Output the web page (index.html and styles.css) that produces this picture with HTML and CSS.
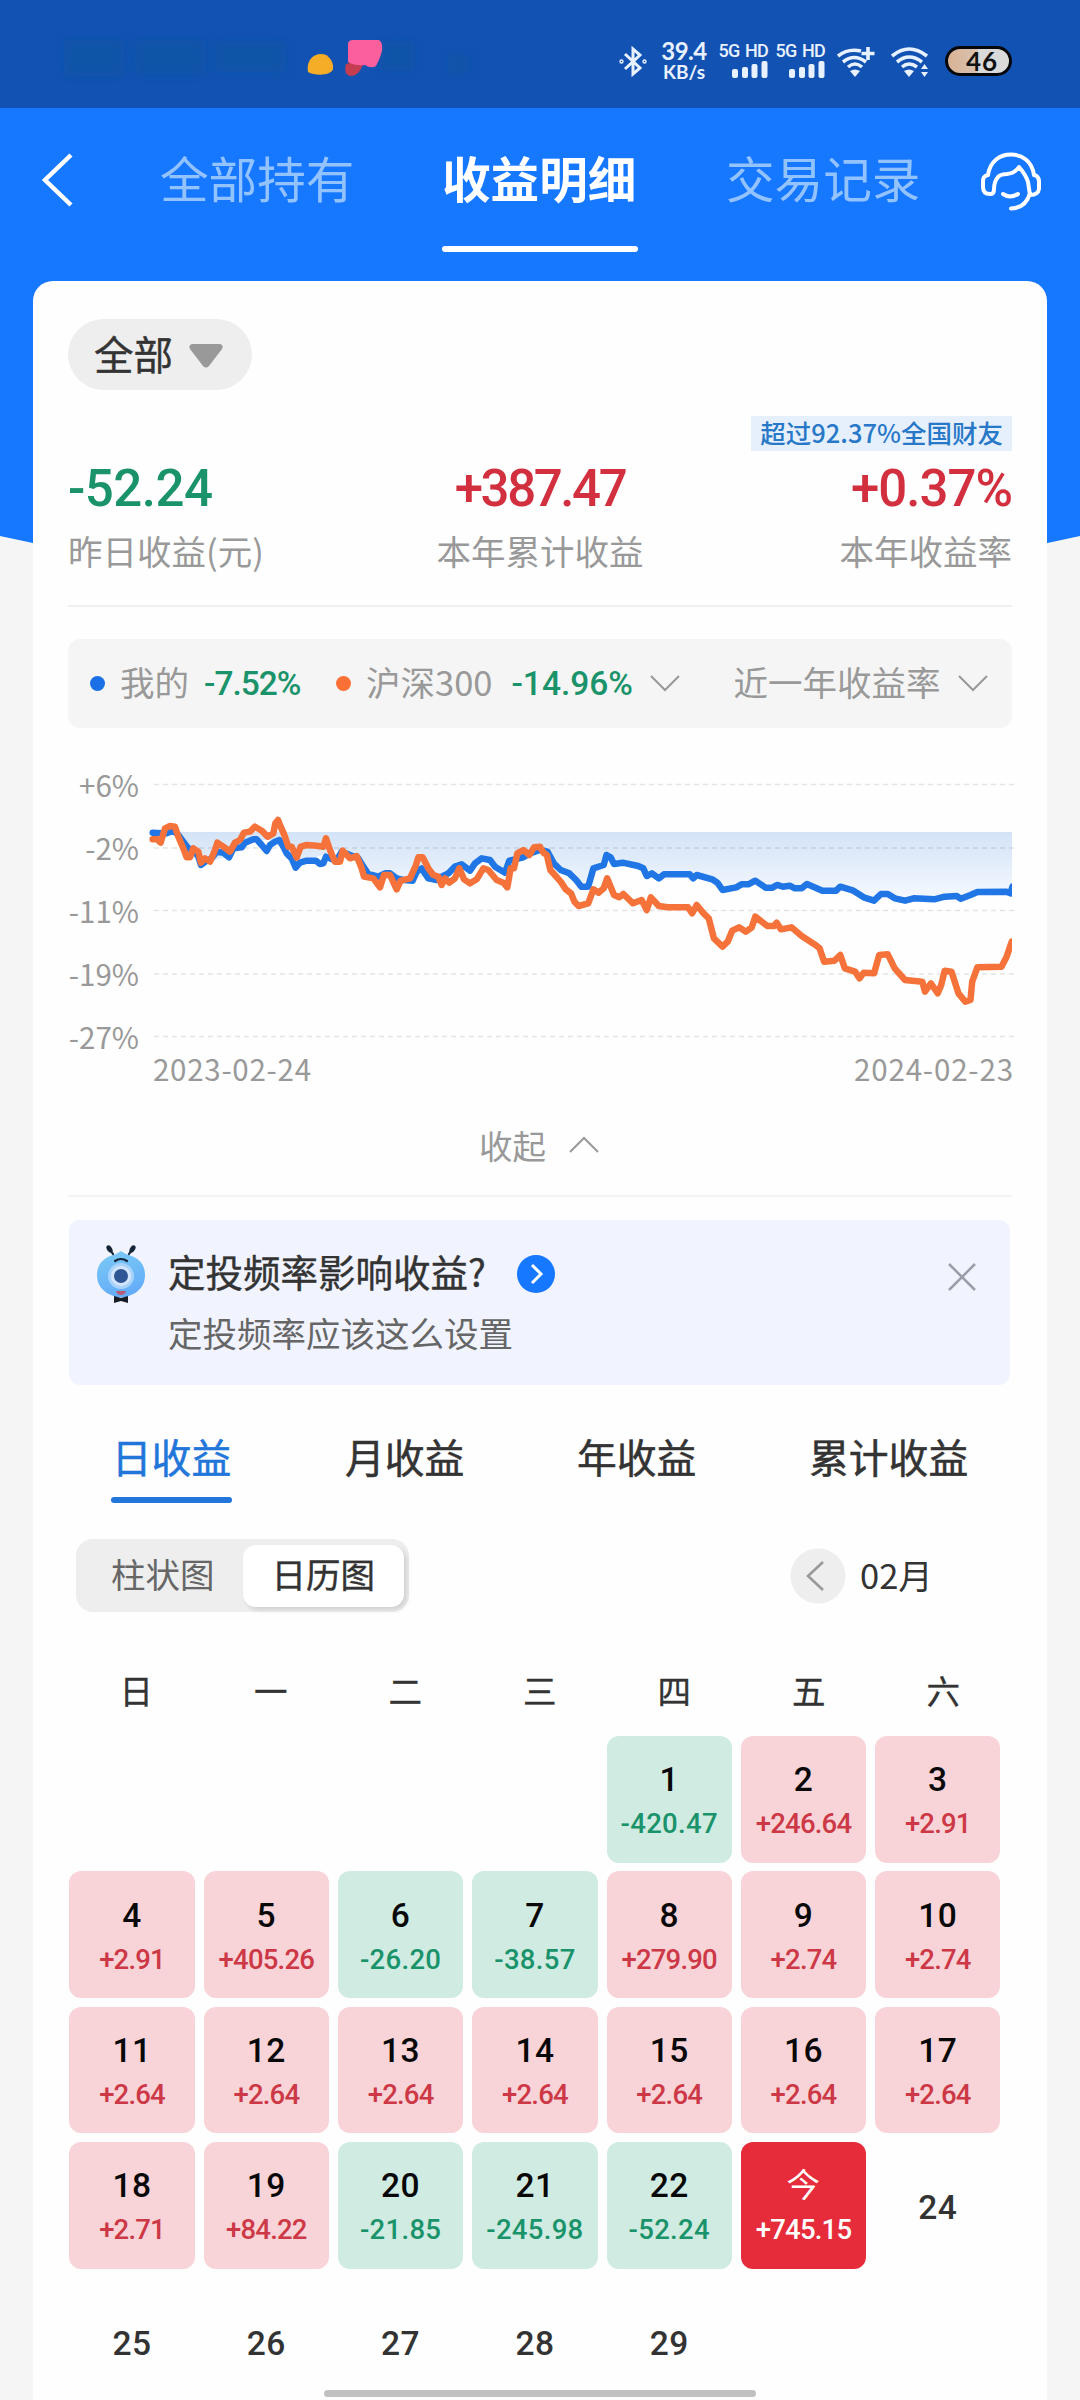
FILE: index.html
```
<!DOCTYPE html>
<html lang="zh-CN">
<head>
<meta charset="utf-8">
<title>收益明细</title>
<link rel="stylesheet" href="styles.css">
</head>
<body>
<div class="screen">
  <header class="status">
    <svg class="notice" width="430" height="50" viewBox="52 34 430 50">
      <defs><filter id="soft" x="-10%" y="-60%" width="120%" height="220%"><feGaussianBlur stdDeviation="5"/></filter></defs>
      <g filter="url(#soft)" fill="#0f56a0" opacity=".6"><rect x="64" y="40" width="60" height="36"/><rect x="135" y="40" width="70" height="34"/><rect x="215" y="42" width="70" height="30"/><rect x="380" y="42" width="34" height="28"/><rect x="448" y="54" width="20" height="20"/></g>
      <path d="M308 72c-2-10 4-18 13-18 8 0 13 8 12 15-2 7-18 7-25 3z" fill="#f5ad27"/>
      <path d="M346 64q10-4 17 1-5 11-11 11-9 0-6-12z" fill="#c43c50"/>
      <path d="M348 43q1-3 5-3h26q4 2 3 11-2 8-6 15-5 3-11-1-10 1-17-3z" fill="#fb5f9c"/>
    </svg>
    <div class="status-icons">
      <svg class="bt" width="28" height="32" viewBox="0 0 28 32" fill="none" stroke="#e8f1ff" stroke-width="3"><path d="M6 8l15 14-7 6V3l7 6L6 23"/><circle cx="2.500" cy="15.500" r=".7"/><circle cx="25.500" cy="15.500" r=".7"/></svg>
      <div class="speed"><b>39.4</b><span>KB/s</span></div>
      <div class="cell-net"><span>5G HD</span><svg width="36" height="17" fill="#e8f1ff"><rect x="0" y="8" width="6" height="9" rx="2"/><rect x="10" y="6" width="6" height="11" rx="2"/><rect x="19.500" y="3" width="6" height="14" rx="2"/><rect x="29.500" y="0" width="6" height="17" rx="2"/></svg></div>
      <div class="cell-net second"><span>5G HD</span><svg width="36" height="17" fill="#e8f1ff"><rect x="0" y="8" width="6" height="9" rx="2"/><rect x="10" y="6" width="6" height="11" rx="2"/><rect x="19.500" y="3" width="6" height="14" rx="2"/><rect x="29.500" y="0" width="6" height="17" rx="2"/></svg></div>
      <svg class="wifi" width="38" height="32" viewBox="0 0 38 32" fill="none" stroke="#e8f1ff" stroke-width="3.600"><path d="M1 10Q11 2 24 5M6 16q11-9 23 0M11 21q7-6 14 0M31 1v13M24.500 7.500h13"/><path d="M13 25q5-3 10 0l-5 6z" fill="#e8f1ff" stroke="none"/></svg>
      <svg class="wifi two" width="38" height="32" viewBox="0 0 38 32" fill="none" stroke="#e8f1ff" stroke-width="3.600"><path d="M1 10q17-14 35 0M6 16q12-10 25 0M11 21q7-6 15 0"/><path d="M13 25q5-3 10 0l-5 6zM30 23l3.500-5 3.500 5zM30 26h7l-3.500 5z" fill="#e8f1ff" stroke="none"/></svg>
      <div class="battery">46</div>
    </div>
  </header>

  <nav class="topnav">
    <svg class="back" width="32" height="56" viewBox="0 0 32 56" fill="none" stroke="#fff" stroke-width="4.500"><path d="M30 3L4 28l26 25"/></svg>
    <span class="nav-tab">全部持有</span>
    <span class="nav-tab on">收益明细</span>
    <span class="nav-tab last">交易记录</span>
    <svg class="service" width="62" height="60" viewBox="0 0 62 60" fill="none" stroke="#fff" stroke-width="4" stroke-linecap="round" stroke-linejoin="round"><path d="M8 23C10 9 20 2.500 31 2.500S52 9 54 23M8 23Q3 24 3 29v6q0 7 7 7h1q3 0 3-5 0-7 4-12 3-3 9-3 8-1 12-7 7 8 9 15l2 13q8 0 9-6v-7q0-6-5-7M50 41Q46 56 31 56.500M23 42q7 5 15 0"/></svg>
  </nav>

  <svg class="hero-curve" width="1080" height="60" viewBox="0 0 1080 60"><path d="M0 0H1080V26Q540 146 0 26z" fill="#1677ff"/></svg>

  <main class="card">
    <button class="filter">全部<svg width="34" height="24" viewBox="0 0 34 24"><path d="M3 0h28q4 1 2 5L20 22q-3 3-6 0L1 5Q-1 1 3 0z" fill="#999"/></svg></button>

    <section class="stats">
      <div class="stat"><b class="green">-52.24</b><span>昨日收益(元)</span></div>
      <div class="stat mid"><b class="red">+387.47</b><span>本年累计收益</span></div>
      <div class="stat end"><em>超过92.37%全国财友</em><b class="red">+0.37%</b><span>本年收益率</span></div>
    </section>

    <section class="legend">
      <i class="dot blue"></i><span>我的</span><b class="b1">-7.52%</b>
      <i class="dot orange"></i><span>沪深300</span><b class="b2">-14.96%</b>
      <svg class="chev" width="30" height="18" viewBox="0 0 30 18"><path d="M1 1l14 14L29 1"/></svg>
      <span class="range">近一年收益率</span>
      <svg class="chev" width="30" height="18" viewBox="0 0 30 18"><path d="M1 1l14 14L29 1"/></svg>
    </section>

    <svg class="chart" width="952" height="362" viewBox="64 738 952 362">
      <defs>
        <linearGradient id="area" x1="0" y1="832" x2="0" y2="900" gradientUnits="userSpaceOnUse"><stop offset="0" stop-color="#d3e3f7"/><stop offset="1" stop-color="#f5f9ff"/></linearGradient>
        <clipPath id="plot"><rect x="148" y="760" width="864" height="300"/></clipPath>
      </defs>
      <g fill="url(#area)"><path d="M180 832H540V850L520 854 505 872 480 860 460 870 435 876 400 880 360 867 345 848 300 862 280 840 255 840 230 856 200 864 185 838z"/><path d="M540 832H1012V888L960 896 900 899 870 898 840 890 790 886 755 882 725 888 700 876 660 874 605 856 595 868 585 886 560 870 547 850 540 850z"/></g>
      <g class="grid"><path d="M154 784.500H1014M154 848H1014M154 910.500H1014M154 974H1014M154 1036.500H1014"/></g>
      <g class="axis" text-anchor="end"><text x="139" y="797">+6%</text><text x="139" y="859.500">-2%</text><text x="139" y="923">-11%</text><text x="139" y="986">-19%</text><text x="139" y="1049">-27%</text></g>
      <g class="axis"><text x="153" y="1081" textLength="158">2023-02-24</text><text x="854" y="1081" textLength="159">2024-02-23</text></g>
      <g clip-path="url(#plot)">
      <g class="line mine">
        <polyline transform="translate(40 620) scale(.33333)" points="338,638 365,640 380,640 400,632 415,645 430,665 445,685 460,690 475,710 483,735 500,722 515,715 530,695 550,698 567,712 580,685 605,682 615,668 640,658 650,658 665,675 680,693 690,675 705,665 718,660 730,680 740,700 755,715 767,743 780,728 800,722 828,722 840,732 850,730 858,710 870,715 890,722 905,695 930,705 955,715 970,740 985,762 1015,770 1035,760 1050,760 1070,775 1090,780 1118,782 1130,755 1145,745 1165,775 1190,780 1205,770 1225,760 1245,740 1265,733 1290,752 1305,730 1325,715 1350,720 1365,740 1395,758 1408,722 1425,718 1450,712 1470,700 1500,690"/>
        <polyline transform="translate(540 620) scale(.34438 .33333)" points="0,690 22,695 40,730 60,750 85,760 105,780 120,800 140,800 155,745 185,735 193,705 205,712 215,732 240,728 285,738 300,745 310,768 325,760 345,775 360,763 435,763 445,775 455,765 500,778 515,788 530,810 570,802 585,793 605,793 625,782 655,803 675,803 688,795 705,800 725,797 740,805 760,805 775,792 800,803 820,812 860,812 872,800 910,812 940,832 970,842 990,822 1010,822 1030,835 1060,842 1085,835 1145,838 1175,830 1210,828 1222,836 1250,825 1270,816 1355,815 1366,820 1372,800"/>
      </g>
      <g class="line index">
        <polyline transform="translate(40 620) scale(.33333)" points="338,658 352,658 362,668 375,625 390,618 405,620 415,650 430,685 440,712 450,712 460,685 475,695 483,728 495,715 510,725 525,690 532,668 550,680 570,695 585,668 600,660 612,638 630,635 645,620 665,632 683,650 700,640 706,610 714,600 722,620 735,650 745,680 755,680 770,713 782,680 800,675 830,677 850,680 858,655 870,690 885,725 900,725 908,692 930,715 950,708 965,745 972,770 1000,775 1020,802 1032,765 1050,765 1070,808 1082,782 1110,775 1128,735 1135,712 1148,712 1165,745 1180,765 1195,770 1205,795 1215,775 1228,788 1245,775 1258,745 1272,778 1290,790 1310,778 1330,745 1345,750 1370,780 1390,788 1402,802 1412,745 1422,745 1432,700 1450,690 1468,705 1482,682 1500,680"/>
        <polyline transform="translate(540 620) scale(.34438 .33333)" points="0,682 12,700 20,705 30,750 60,785 75,808 90,820 100,845 112,858 140,850 155,808 170,818 185,805 195,775 215,825 230,832 242,822 270,850 295,840 310,870 322,832 345,858 370,862 430,862 442,880 455,855 475,880 490,895 505,955 530,980 545,965 558,932 578,922 598,935 615,922 625,890 660,918 680,918 687,908 700,928 730,922 760,948 800,975 812,985 825,1025 855,1022 872,1005 885,1045 915,1055 928,1075 940,1058 970,1060 985,1005 1010,1003 1030,1045 1060,1080 1110,1085 1118,1115 1135,1090 1155,1120 1165,1095 1175,1052 1195,1055 1215,1120 1235,1145 1250,1140 1255,1085 1270,1042 1340,1040 1355,1010 1370,965"/>
      </g>
      </g>
    </svg>

    <div class="fold"><span>收起</span><svg class="chev" width="30" height="18" viewBox="0 0 30 18"><path d="M1 16L15 2l14 14"/></svg></div>

    <section class="banner">
      <svg class="mascot" width="50" height="60" viewBox="0 0 50 60">
        <defs><linearGradient id="body" x1="0" y1="0" x2=".3" y2="1"><stop offset="0" stop-color="#7ccbf5"/><stop offset="1" stop-color="#64adf8"/></linearGradient></defs>
        <path d="M25 6q4 3 8 4 16 5 16 20 0 14-14 20-10 5-20 0Q1 44 1 30 1 15 17 10q4-1 8-4z" fill="url(#body)"/>
        <circle cx="25" cy="31" r="13" fill="#a9d3fb"/><circle cx="25" cy="31" r="10" fill="#d3e6fd"/><circle cx="25" cy="31" r="7" fill="#2e5594"/>
        <path d="M19 16q6-4 12 0M17 9l-4-6M33 9l4-6" fill="none" stroke="#162437" stroke-width="2.200" stroke-linecap="round"/>
        <ellipse cx="13.500" cy="4" rx="2.500" ry="4" transform="rotate(-32 13.500 4)" fill="#162437"/><ellipse cx="36.500" cy="4" rx="2.500" ry="4" transform="rotate(32 36.500 4)" fill="#162437"/>
        <path d="M20 46h10q-1 4-5 4t-5-4z" fill="#b65b72"/><path d="M18 51l7 2 7-2v7l-7-2-7 2z" fill="#171d26"/>
      </svg>
      <div class="banner-copy"><div class="banner-title"><span>定投频率影响收益?</span><svg width="38" height="38" viewBox="0 0 38 38"><circle cx="19" cy="19" r="19" fill="#1677ff"/><path d="M15 10l9 9-9 9" fill="none" stroke="#fff" stroke-width="3"/></svg></div><p>定投频率应该这么设置</p></div>
      <svg class="close" width="28" height="28" viewBox="0 0 28 28"><path d="M1 1l26 26M27 1L1 27" stroke="#999ea8" stroke-width="2.500"/></svg>
    </section>

    <nav class="period"><span class="on">日收益</span><span>月收益</span><span>年收益</span><span>累计收益</span></nav>

    <div class="tools">
      <div class="segment"><span>柱状图</span><span class="on">日历图</span></div>
      <div class="month"><svg width="56" height="56" viewBox="0 0 56 56"><circle cx="28" cy="28" r="27.500" fill="#eee"/><path d="M33 14L18 28l15 14" fill="none" stroke="#999" stroke-width="2.600"/></svg><span>02月</span></div>
    </div>

    <div class="week"><span>日</span><span>一</span><span>二</span><span>三</span><span>四</span><span>五</span><span>六</span></div>

    <section class="calendar">
      <div class="day down first"><b>1</b><span>-420.47</span></div><div class="day up"><b>2</b><span>+246.64</span></div><div class="day up"><b>3</b><span>+2.91</span></div>
      <div class="day up"><b>4</b><span>+2.91</span></div><div class="day up"><b>5</b><span>+405.26</span></div><div class="day down"><b>6</b><span>-26.20</span></div><div class="day down"><b>7</b><span>-38.57</span></div><div class="day up"><b>8</b><span>+279.90</span></div><div class="day up"><b>9</b><span>+2.74</span></div><div class="day up"><b>10</b><span>+2.74</span></div>
      <div class="day up"><b>11</b><span>+2.64</span></div><div class="day up"><b>12</b><span>+2.64</span></div><div class="day up"><b>13</b><span>+2.64</span></div><div class="day up"><b>14</b><span>+2.64</span></div><div class="day up"><b>15</b><span>+2.64</span></div><div class="day up"><b>16</b><span>+2.64</span></div><div class="day up"><b>17</b><span>+2.64</span></div>
      <div class="day up"><b>18</b><span>+2.71</span></div><div class="day up"><b>19</b><span>+84.22</span></div><div class="day down"><b>20</b><span>-21.85</span></div><div class="day down"><b>21</b><span>-245.98</span></div><div class="day down"><b>22</b><span>-52.24</span></div><div class="day today"><b>今</b><span>+745.15</span></div><div class="day"><b>24</b></div>
      <div class="day"><b>25</b></div><div class="day"><b>26</b></div><div class="day"><b>27</b></div><div class="day"><b>28</b></div><div class="day"><b>29</b></div>
    </section>
  </main>
  <div class="home-bar"></div>
</div>
</body>
</html>
```
FILE: styles.css
```
* { box-sizing: border-box; }
body { margin: 0; background: #f5f5f5; font-family: "Noto Sans CJK SC", sans-serif; color: #333; }
b, em, i { font-style: normal; font-weight: 500; }
svg { display: block; flex: none; }
p { margin: 0; }
.screen { position: relative; width: 1080px; height: 2400px; overflow: hidden; background: linear-gradient(#1677ff 0 511px, #f5f5f5 511px); }

.status { height: 108px; padding-left: 52px; background: #1252b2; display: flex; align-items: flex-start; }
.notice { margin-top: 34px; }
.status-icons { display: flex; margin-left: 137px; padding-top: 42px; color: #e8f1ff; font-family: Roboto, sans-serif; }
.bt { margin-top: 4px; }
.speed { width: 46px; margin-left: 14px; margin-top: -2px; display: flex; flex-direction: column; align-items: center; }
.speed b { font-family: Lato, sans-serif; font-weight: 700; font-size: 24px; line-height: 22px; letter-spacing: -.5px; }
.speed span { font-family: Lato, sans-serif; font-weight: 700; font-size: 19px; line-height: 19px; }
.cell-net { width: 48px; margin-left: 13px; display: flex; flex-direction: column; align-items: flex-end; font-size: 18px; font-weight: 500; line-height: 18px; white-space: nowrap; letter-spacing: -.8px; word-spacing: 2px; }
.cell-net svg { margin-top: 1px; }
.cell-net.second { margin-left: 9px; }
.wifi { margin: 4px 0 0 12px; }
.wifi.two { margin-left: 16px; }
.battery { width: 67px; height: 30px; margin: 4px 0 0 16px; padding-left: 7px; border: 3px solid #05070b; border-radius: 15px; background: linear-gradient(90deg, #d9b294 0, #d8c2b1 48%, #dadada 50%); color: #111; font: 700 26px/24px Lato, sans-serif; text-align: center; letter-spacing: 1px; }

.topnav { height: 173px; background: #1677ff; display: flex; align-items: flex-start; }
.back { margin: 44px 0 0 41px; }
.nav-tab { width: 196px; height: 144px; margin-left: 87px; padding-top: 33px; font-size: 48.600px; line-height: 72px; color: #93c3ff; white-space: nowrap; }
.nav-tab.on { position: relative; margin-left: 86px; font-weight: 700; color: #fff; }
.nav-tab.on::after { content: ""; position: absolute; left: 0; bottom: 0; width: 196px; height: 6px; border-radius: 3px; background: #fff; }
.nav-tab.last { margin-left: 88px; }
.service { margin: 44px 0 0 58px; }

.hero-curve { position: absolute; left: 0; top: 510px; }
.card { position: relative; width: 1014px; height: 2119px; margin-left: 33px; padding: 38px 35px 0; border-radius: 20px 20px 0 0; background: #fefefe; overflow: hidden; }

.filter { width: 184px; height: 71px; border: 0; border-radius: 36px; background: #eee; display: flex; align-items: center; gap: 15px; padding: 0 0 4px 26px; font: 400 39.500px/60px "Noto Sans CJK SC", sans-serif; color: #333; -webkit-text-stroke: .4px #333; }
.filter svg { margin: 6px 0 0 1px; }
.stats { height: 217px; display: grid; grid-template-columns: 1fr 1fr 1fr; border-bottom: 2px solid #f0f0f0; }
.stat { display: flex; flex-direction: column; align-items: flex-start; padding-top: 67px; }
.stat.mid { align-items: center; }
.stat.end { align-items: flex-end; padding-top: 26px; }
.stat b { font: 500 51px/64px Roboto, sans-serif; letter-spacing: -.5px; }
.stat.mid b { letter-spacing: -2.400px; }
.stat.end b { letter-spacing: -1px; }
.stat span { font-size: 34.500px; line-height: 50px; margin-top: 4px; color: #999; white-space: nowrap; }
.stat em { height: 35px; margin-bottom: 6px; padding: 0 9px; font-size: 25.500px; line-height: 32px; color: #2878c8; background: #e6f0fc; white-space: nowrap; }
.green { color: #1a936b; }
.red { color: #d2303f; }

.legend { height: 89px; margin-top: 32px; padding-left: 22px; border-radius: 12px; background: #f5f5f5; display: flex; align-items: center; font-size: 34.500px; line-height: 50px; color: #999; white-space: nowrap; }
.legend > span { margin-bottom: 5px; }
.dot { width: 15px; height: 15px; border-radius: 50%; }
.dot + span { margin-left: 15px; }
.dot.blue { background: #1b70e8; }
.dot.orange { background: #fa7035; }
.legend b { font: 500 33.500px/40px Roboto, sans-serif; color: #1a936b; margin-top: 1px; }
.legend .b1 { width: 120px; margin-left: 15px; letter-spacing: -1px; }
.b1 + .dot { margin-left: 12px; }
.legend .b2 { width: 121px; margin-left: 19px; }
.legend .chev { margin-left: 18px; }
.range { margin-left: 53px; }
.chev path { fill: none; stroke: #999; stroke-width: 2; }

.chart { margin: 10px 0 0 -4px; overflow: visible; }
.grid path { fill: none; stroke: #000; stroke-opacity: .1; stroke-width: 1.500; stroke-dasharray: 5 4; }
.axis { font-family: "Noto Sans CJK SC", sans-serif; font-size: 29.500px; fill: #999; }
.line polyline { fill: none; stroke-width: 6.500; stroke-linejoin: round; stroke-linecap: round; vector-effect: non-scaling-stroke; }
.mine { stroke: #2176e5; }
.index { stroke: #f5733b; }

.fold { height: 97px; display: flex; align-items: center; justify-content: center; gap: 23px; padding: 0 2px 6px 0; font-size: 33.500px; line-height: 48px; color: #999; border-bottom: 2px solid #f3f3f3; }
.banner { width: 941px; height: 165px; margin: 23px 0 0 1px; border-radius: 11px; background: #f1f4ff; display: flex; align-items: flex-start; }
.mascot { margin: 25px 0 0 27px; }
.banner-copy { margin: 26px 0 0 22px; }
.banner-title { height: 54px; display: flex; align-items: center; gap: 31px; font-size: 37.500px; font-weight: 400; -webkit-text-stroke: .4px #333; }
.banner-title span { margin-bottom: 5px; }
.banner-title svg { margin-top: 2px; }
.banner-copy p { margin-top: 7px; font-size: 34.500px; line-height: 50px; color: #666; }
.close { margin: 43px 34px 0 auto; }

.period { height: 121px; display: flex; align-items: flex-start; font-size: 39.800px; line-height: 58px; font-weight: 400; -webkit-text-stroke: .5px; padding: 42px 0 0 43px; }
.period span { width: 119px; margin-right: 113px; white-space: nowrap; flex: none; }
.period .on { width: 121px; height: 76px; color: #2275d9; position: relative; text-align: center; }
.period .on::after { content: ""; position: absolute; left: 0; bottom: 0; width: 121px; height: 6px; border-radius: 3px; background: #2275d9; }
.tools { display: flex; align-items: center; margin-top: 33px; height: 73px; padding-left: 8px; }
.segment { width: 333px; height: 73px; padding: 6px 5px; border-radius: 17px; background: #eee; display: flex; font-size: 34.500px; line-height: 57px; color: #666; }
.segment span { width: 162px; padding-left: 30px; white-space: nowrap; }
.segment .on { width: 162px; height: 62px; padding: 0; text-align: center; border-radius: 13px; background: #fff; color: #333; -webkit-text-stroke: .4px #333; box-shadow: 3px 3px 5px rgba(0,0,0,.12); }
.month { display: flex; align-items: center; margin-left: 381px; gap: 14px; font-size: 34.500px; }
.month span { line-height: 50px; margin-bottom: 4px; }

.week { display: grid; grid-template-columns: repeat(7, 134.500px); margin: 53px 0 0 1px; font-size: 33.500px; line-height: 50px; -webkit-text-stroke: .3px #333; text-align: center; }
.calendar { display: grid; grid-template-columns: repeat(7, 125.300px); grid-auto-rows: 126.700px; gap: 8.700px 9px; margin: 21px 0 0 1.400px; }
.first { grid-column: 5; }
.day { border-radius: 12px; display: flex; flex-direction: column; align-items: center; justify-content: center; padding-top: 6px; color: #333; white-space: nowrap; }
.day b { font: 500 33.500px/44px Roboto, "Noto Sans CJK SC", sans-serif; letter-spacing: .5px; }
.day span { font: 500 27.500px/44px Roboto, sans-serif; letter-spacing: .3px; }
.up { background: #f8d4d8; }
.down { background: #d0ebe2; }
.up b, .down b { color: #080808; }
.day.up span, .day.today span { letter-spacing: -.8px; }
.up span { color: #cd3846; }
.down span { color: #1a936b; }
.day.today { background: #e62b3a; color: #fff; }
.today b { font-weight: 400; }
.home-bar { position: absolute; left: 324px; top: 2390px; width: 432px; height: 7px; border-radius: 4px; background: #c1c1c1; }
```
